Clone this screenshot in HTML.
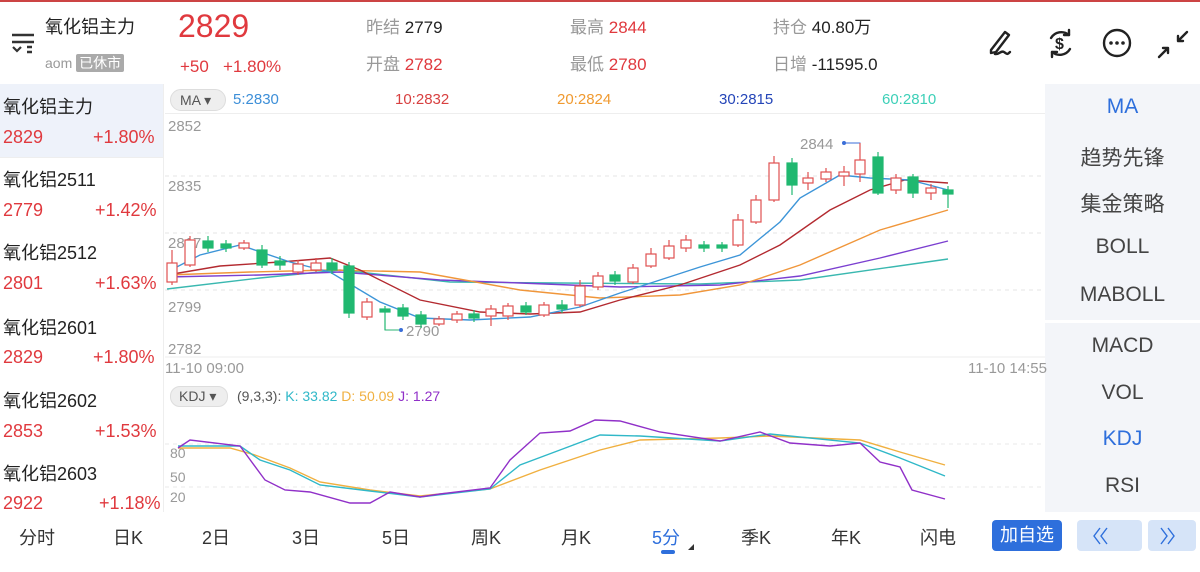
<!DOCTYPE html>
<html><head><meta charset="utf-8"><style>
*{margin:0;padding:0;box-sizing:border-box}
body{width:1200px;height:572px;overflow:hidden;background:#fff;font-family:"Liberation Sans","Noto Sans CJK SC",sans-serif;position:relative;color:#222}
.a{position:absolute;white-space:nowrap}
.g{color:#999}.r{color:#e0393e}.k{color:#222}
.li{font-size:18px}
.rp{font-size:21px;color:#444;width:155px;text-align:center;left:1045px}
.tab{font-size:18px;color:#333;top:524px}
</style></head><body>
<div class="a" style="left:0;top:0;width:1200px;height:2px;background:#c44"></div>
<!-- header -->
<svg class="a" style="left:10px;top:32px" width="28" height="24" viewBox="0 0 28 24"><path d="M2 3H24M2 10H24" stroke="#333" stroke-width="2.4"/><path d="M3 15l4 4 4-4" fill="none" stroke="#333" stroke-width="2.2"/><path d="M17 15h5M17 20h5" stroke="#333" stroke-width="2.4"/></svg>
<div class="a" style="left:45px;top:13px;font-size:18px">氧化铝主力</div>
<div class="a g" style="left:45px;top:53px;font-size:14px">aom <span style="background:#aaa;color:#fff;padding:1px 3px;border-radius:2px">已休市</span></div>
<div class="a r" style="left:178px;top:8px;font-size:32px">2829</div>
<div class="a r" style="left:180px;top:57px;font-size:17px">+50 &nbsp;&nbsp;+1.80%</div>
<div class="a" style="left:366px;top:13px;font-size:17px"><span class="g">昨结</span> <span class="k">2779</span></div>
<div class="a" style="left:366px;top:50px;font-size:17px"><span class="g">开盘</span> <span class="r">2782</span></div>
<div class="a" style="left:570px;top:13px;font-size:17px"><span class="g">最高</span> <span class="r">2844</span></div>
<div class="a" style="left:570px;top:50px;font-size:17px"><span class="g">最低</span> <span class="r">2780</span></div>
<div class="a" style="left:773px;top:13px;font-size:17px"><span class="g">持仓</span> <span class="k">40.80万</span></div>
<div class="a" style="left:773px;top:50px;font-size:17px"><span class="g">日增</span> <span class="k">-11595.0</span></div>
<svg class="a" style="left:985px;top:26px" width="215" height="34" viewBox="0 0 215 34">
<g fill="none" stroke="#222" stroke-width="2.4" stroke-linecap="round" stroke-linejoin="round">
<path d="M6 24L20 6l4 3-13 17-5 1z"/><path d="M10 28c4 1 6-4 9-2s3 3 6 0"/>
<path d="M84 9a12 12 0 0 0-18 3M67 26a12 12 0 0 0 18-3"/><path d="M84 4v5h-5M67 31v-5h5"/>
<circle cx="132" cy="17" r="13"/>
<path d="M202 6l-9 9M193 10v5h5M174 31l9-9M183 27v-5h-5"/>
</g>
<text x="70" y="23" font-size="16" font-weight="bold" fill="#222" font-family="Liberation Sans">$</text>
<g fill="#222"><circle cx="126" cy="17" r="1.8"/><circle cx="132" cy="17" r="1.8"/><circle cx="138" cy="17" r="1.8"/></g>
</svg>
<!-- left list -->
<div class="a" style="left:0;top:84px;width:163px;height:73px;background:#eef2fa"></div>
<div class="a" style="left:0;top:157px;width:163px;height:1px;background:#eee"></div>
<div class="a" style="left:163px;top:84px;width:1px;height:428px;background:#eee"></div>
<div class="a li" style="left:3px;top:93px">氧化铝主力</div>
<div class="a li r" style="left:3px;top:127px">2829</div><div class="a li r" style="left:93px;top:127px">+1.80%</div>
<div class="a li" style="left:3px;top:166px">氧化铝2511</div>
<div class="a li r" style="left:3px;top:200px">2779</div><div class="a li r" style="left:95px;top:200px">+1.42%</div>
<div class="a li" style="left:3px;top:239px">氧化铝2512</div>
<div class="a li r" style="left:3px;top:273px">2801</div><div class="a li r" style="left:95px;top:273px">+1.63%</div>
<div class="a li" style="left:3px;top:314px">氧化铝2601</div>
<div class="a li r" style="left:3px;top:347px">2829</div><div class="a li r" style="left:93px;top:347px">+1.80%</div>
<div class="a li" style="left:3px;top:387px">氧化铝2602</div>
<div class="a li r" style="left:3px;top:421px">2853</div><div class="a li r" style="left:95px;top:421px">+1.53%</div>
<div class="a li" style="left:3px;top:460px">氧化铝2603</div>
<div class="a li r" style="left:3px;top:493px">2922</div><div class="a li r" style="left:99px;top:493px">+1.18%</div>
<!-- right panel -->
<div class="a" style="left:1045px;top:84px;width:155px;height:236px;background:#f3f5f9"></div>
<div class="a" style="left:1045px;top:323px;width:155px;height:189px;background:#f3f5f9"></div>
<div class="a rp" style="top:95px;color:#2e6fdc">MA</div>
<div class="a rp" style="top:142px">趋势先锋</div>
<div class="a rp" style="top:188px">集金策略</div>
<div class="a rp" style="top:235px">BOLL</div>
<div class="a rp" style="top:283px">MABOLL</div>
<div class="a rp" style="top:334px">MACD</div>
<div class="a rp" style="top:381px">VOL</div>
<div class="a rp" style="top:427px;color:#2e6fdc">KDJ</div>
<div class="a rp" style="top:474px">RSI</div>
<!-- MA legend -->
<div class="a" style="left:170px;top:89px;width:56px;height:22px;background:#eee;border:1px solid #ddd;border-radius:11px;font-size:14px;color:#555;padding:2px 0 0 9px">MA ▾</div>
<div class="a" style="left:233px;top:91px;font-size:15px;color:#3d8fd8">5:2830</div>
<div class="a" style="left:395px;top:91px;font-size:15px;color:#d84040">10:2832</div>
<div class="a" style="left:557px;top:91px;font-size:15px;color:#f09a30">20:2824</div>
<div class="a" style="left:719px;top:91px;font-size:15px;color:#2445b8">30:2815</div>
<div class="a" style="left:882px;top:91px;font-size:15px;color:#3dd0b8">60:2810</div>
<div class="a" style="left:165px;top:113px;width:880px;height:1px;background:#eee"></div>
<svg class="a" style="left:0;top:0" width="1200" height="572">
<g stroke="#e4e4e4" stroke-dasharray="4 4"><line x1="165" y1="176" x2="1045" y2="176"/><line x1="165" y1="233" x2="1045" y2="233"/><line x1="165" y1="290" x2="1045" y2="290"/></g>
<line x1="165" y1="357" x2="1045" y2="357" stroke="#eee"/>
<g font-size="15" fill="#999" font-family="Liberation Sans"><text x="168" y="131">2852</text><text x="168" y="191">2835</text><text x="168" y="248">2817</text><text x="168" y="312">2799</text><text x="168" y="354">2782</text><text x="165" y="373">11-10 09:00</text><text x="968" y="373">11-10 14:55</text><text x="800" y="149">2844</text><text x="406" y="336">2790</text></g>
<path d="M844 143H860V160" fill="none" stroke="#3a6ed8"/><circle cx="844" cy="143" r="2" fill="#3a6ed8"/>
<path d="M385 312V330H401" fill="none" stroke="#2bb673"/><circle cx="401" cy="330" r="2" fill="#3a6ed8"/>
<g fill="none" stroke-width="1.4">
<polyline stroke="#3ab8b0" points="167,289 260,278 340,270 450,282 560,283 700,284 800,280 948,259"/>
<polyline stroke="#7b3fd0" points="167,277 260,275 340,272 440,280 520,283 620,287 720,285 800,276 880,258 948,241"/>
<polyline stroke="#f0963a" points="167,275 250,272 330,270 420,272 520,290 600,298 680,295 740,285 800,265 880,230 948,210"/>
<polyline stroke="#b32a30" points="167,275 220,266 280,262 330,258 360,270 420,300 480,312 530,314 580,312 620,300 680,285 740,265 780,245 830,210 870,190 905,180 948,183"/>
<polyline stroke="#3d95d8" points="167,272 200,255 240,245 290,262 330,272 380,302 420,318 470,320 530,317 580,307 620,293 660,280 700,267 740,255 780,222 800,198 840,175 870,178 910,180 948,190"/>
</g>
<g stroke="#e8e8e8" stroke-dasharray="4 4"><line x1="165" y1="444" x2="1045" y2="444"/><line x1="165" y1="487" x2="1045" y2="487"/></g>
<g font-size="14" fill="#999" font-family="Liberation Sans"><text x="170" y="458">80</text><text x="170" y="482">50</text><text x="170" y="502">20</text></g>
<g fill="none" stroke-width="1.4">
<polyline stroke="#f0b040" points="178,448 230,448 255,455 290,468 320,482 370,490 420,496 490,489 540,470 600,450 640,440 720,438 770,436 860,440 900,452 945,465"/>
<polyline stroke="#30b8c8" points="178,446 240,446 260,460 290,470 320,485 370,491 420,497 490,489 520,465 560,450 600,435 640,436 720,441 770,434 860,443 900,458 945,476"/>
<polyline stroke="#9030c8" points="178,448 190,440 240,446 265,480 285,490 310,492 350,503 370,503 390,492 420,497 440,494 490,488 510,460 540,433 570,431 595,420 620,421 660,432 720,441 760,432 790,443 830,446 860,443 880,462 900,467 912,490 945,499"/>
</g>
</svg>
<div class="a" style="left:170px;top:386px;width:58px;height:21px;background:#eee;border:1px solid #ddd;border-radius:10px;font-size:14px;color:#555;padding:1px 0 0 8px">KDJ ▾</div>
<div class="a" style="left:237px;top:388px;font-size:14px;color:#555">(9,3,3): <span style="color:#30b8c8">K: 33.82</span> <span style="color:#f0b040">D: 50.09</span> <span style="color:#9030c8">J: 1.27</span></div>
<!-- tabs -->
<div class="a tab" style="left:19px">分时</div>
<div class="a tab" style="left:113px">日K</div>
<div class="a tab" style="left:202px">2日</div>
<div class="a tab" style="left:292px">3日</div>
<div class="a tab" style="left:382px">5日</div>
<div class="a tab" style="left:471px">周K</div>
<div class="a tab" style="left:561px">月K</div>
<div class="a tab" style="left:652px;color:#2e6fdc">5分</div>
<div class="a" style="left:661px;top:550px;width:14px;height:4px;background:#2e6fdc;border-radius:2px"></div>
<div class="a" style="left:688px;top:544px;width:0;height:0;border-left:6px solid transparent;border-bottom:6px solid #333"></div>
<div class="a tab" style="left:741px">季K</div>
<div class="a tab" style="left:831px">年K</div>
<div class="a tab" style="left:920px">闪电</div>
<div class="a" style="left:992px;top:520px;width:70px;height:31px;background:#2e6fdc;border-radius:4px;color:#fff;font-size:18px;text-align:center;line-height:31px">加自选</div>
<div class="a" style="left:1077px;top:520px;width:65px;height:31px;background:#d6e4f8;border-radius:4px"></div>
<div class="a" style="left:1148px;top:520px;width:48px;height:31px;background:#d6e4f8;border-radius:4px"></div>
<svg class="a" style="left:0;top:0" width="1200" height="572">
<g fill="none" stroke="#2e6fdc" stroke-width="1.4"><path d="M1100 528l-6 8 6 8M1107 528l-6 8 6 8M1161 528l6 8-6 8M1168 528l6 8-6 8"/></g>
<g stroke-width="1.2">
<g fill="#fff" stroke="#e05050">
<line x1="172" y1="250" x2="172" y2="285"/><rect x="167" y="263" width="10" height="19"/>
<line x1="190" y1="236" x2="190" y2="267"/><rect x="185" y="240" width="10" height="25"/>
<line x1="244" y1="240" x2="244" y2="250"/><rect x="239" y="243" width="10" height="5"/>
<line x1="298" y1="260" x2="298" y2="275"/><rect x="293" y="264" width="10" height="8"/>
<line x1="316" y1="258" x2="316" y2="272"/><rect x="311" y="263" width="10" height="7"/>
<line x1="367" y1="298" x2="367" y2="320"/><rect x="362" y="302" width="10" height="15"/>
<line x1="439" y1="316" x2="439" y2="326"/><rect x="434" y="319" width="10" height="5"/>
<line x1="457" y1="311" x2="457" y2="323"/><rect x="452" y="314" width="10" height="6"/>
<line x1="491" y1="305" x2="491" y2="326"/><rect x="486" y="309" width="10" height="7"/>
<line x1="508" y1="303" x2="508" y2="320"/><rect x="503" y="306" width="10" height="10"/>
<line x1="544" y1="302" x2="544" y2="317"/><rect x="539" y="305" width="10" height="10"/>
<line x1="580" y1="280" x2="580" y2="307"/><rect x="575" y="286" width="10" height="19"/>
<line x1="598" y1="272" x2="598" y2="290"/><rect x="593" y="276" width="10" height="11"/>
<line x1="633" y1="264" x2="633" y2="284"/><rect x="628" y="268" width="10" height="14"/>
<line x1="651" y1="248" x2="651" y2="268"/><rect x="646" y="254" width="10" height="12"/>
<line x1="669" y1="240" x2="669" y2="260"/><rect x="664" y="246" width="10" height="12"/>
<line x1="686" y1="235" x2="686" y2="252"/><rect x="681" y="240" width="10" height="8"/>
<line x1="738" y1="214" x2="738" y2="247"/><rect x="733" y="220" width="10" height="25"/>
<line x1="756" y1="195" x2="756" y2="224"/><rect x="751" y="200" width="10" height="22"/>
<line x1="774" y1="156" x2="774" y2="202"/><rect x="769" y="163" width="10" height="37"/>
<line x1="808" y1="172" x2="808" y2="190"/><rect x="803" y="178" width="10" height="5"/>
<line x1="826" y1="168" x2="826" y2="182"/><rect x="821" y="172" width="10" height="7"/>
<line x1="844" y1="166" x2="844" y2="186"/><rect x="839" y="172" width="10" height="4"/>
<line x1="860" y1="143" x2="860" y2="182"/><rect x="855" y="160" width="10" height="14"/>
<line x1="896" y1="174" x2="896" y2="194"/><rect x="891" y="178" width="10" height="12"/>
<line x1="931" y1="184" x2="931" y2="200"/><rect x="926" y="188" width="10" height="5"/>
</g>
<g fill="#20b870" stroke="#20b870">
<line x1="208" y1="236" x2="208" y2="252"/><rect x="203" y="241" width="10" height="7"/>
<line x1="226" y1="240" x2="226" y2="252"/><rect x="221" y="244" width="10" height="4"/>
<line x1="262" y1="245" x2="262" y2="268"/><rect x="257" y="250" width="10" height="15"/>
<line x1="280" y1="256" x2="280" y2="270"/><rect x="275" y="261" width="10" height="4"/>
<line x1="332" y1="258" x2="332" y2="274"/><rect x="327" y="263" width="10" height="7"/>
<line x1="349" y1="262" x2="349" y2="318"/><rect x="344" y="266" width="10" height="47"/>
<line x1="385" y1="306" x2="385" y2="330"/><rect x="380" y="309" width="10" height="3"/>
<line x1="403" y1="304" x2="403" y2="320"/><rect x="398" y="308" width="10" height="8"/>
<line x1="421" y1="311" x2="421" y2="328"/><rect x="416" y="315" width="10" height="9"/>
<line x1="474" y1="310" x2="474" y2="322"/><rect x="469" y="314" width="10" height="4"/>
<line x1="526" y1="302" x2="526" y2="315"/><rect x="521" y="306" width="10" height="6"/>
<line x1="562" y1="300" x2="562" y2="313"/><rect x="557" y="305" width="10" height="4"/>
<line x1="615" y1="271" x2="615" y2="285"/><rect x="610" y="275" width="10" height="6"/>
<line x1="704" y1="241" x2="704" y2="252"/><rect x="699" y="245" width="10" height="3"/>
<line x1="722" y1="242" x2="722" y2="252"/><rect x="717" y="245" width="10" height="3"/>
<line x1="792" y1="158" x2="792" y2="195"/><rect x="787" y="163" width="10" height="22"/>
<line x1="878" y1="152" x2="878" y2="195"/><rect x="873" y="157" width="10" height="36"/>
<line x1="913" y1="174" x2="913" y2="198"/><rect x="908" y="177" width="10" height="16"/>
<line x1="948" y1="186" x2="948" y2="208"/><rect x="943" y="190" width="10" height="4"/>
</g>
</g>
</svg>
</body></html>
